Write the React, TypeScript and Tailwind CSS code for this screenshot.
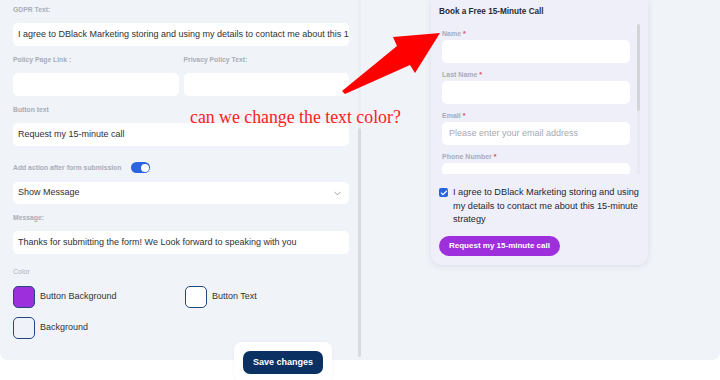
import { ChevronDown, Check } from "lucide-react"

const font = { fontFamily: '"Liberation Sans", Arial, sans-serif' }

function Label({ children }: { children: React.ReactNode }) {
  return <p className="text-[6.8px] font-bold text-[#a9adb7] leading-[7px]">{children}</p>
}

function Field({ value, className = "" }: { value?: string; className?: string }) {
  return (
    <div className={"h-[23px] bg-white rounded-[5px] px-[5px] flex items-center text-[9px] text-[#2f2f33] whitespace-nowrap overflow-hidden " + className}>
      {value}
    </div>
  )
}

function Swatch({ color, label }: { color: string; label: string }) {
  return (
    <div className="flex items-center gap-[5px]">
      <div className={"w-[22px] h-[22px] rounded-[5px] border border-[#24477a] " + color}></div>
      <span className="text-[9px] text-[#333]">{label}</span>
    </div>
  )
}

function PreviewField({ label, placeholder, short }: { label: string; placeholder?: string; short?: boolean }) {
  return (
    <div className="flex flex-col gap-[3px] shrink-0">
      <p className="text-[7px] font-bold text-[#a9abb6] leading-[7px]">
        {label} <span className="text-[#e5484d]">*</span>
      </p>
      <div className={(short ? "h-[11px] rounded-t-[5px]" : "h-[22.5px] rounded-[5px]") + " bg-white px-[7px] flex items-center text-[9px] text-[#a7a9b0]"}>
        {placeholder}
      </div>
    </div>
  )
}

export default function App() {
  return (
    <div className="w-[720px] h-[380px] bg-white relative overflow-hidden" style={font}>
      <div className="h-[360px] bg-[#f0f3f8] rounded-b-[8px] flex">
        {/* settings column */}
        <div className="w-[358px] pl-[13px] pr-[9px] pt-[6px] flex flex-col">
          <Label>GDPR Text:</Label>
          <Field className="mt-[10px]" value="I agree to DBlack Marketing storing and using my details to contact me about this 15-minute strategy" />
          <div className="mt-[10px] grid grid-cols-2 gap-[5px]">
            <div className="flex flex-col gap-[10px]">
              <Label>Policy Page Link :</Label>
              <Field />
            </div>
            <div className="flex flex-col gap-[10px]">
              <Label>Privacy Policy Text:</Label>
              <Field />
            </div>
          </div>
          <div className="mt-[10px]"><Label>Button text</Label></div>
          <Field className="mt-[10px]" value="Request my 15-minute call" />
          <div className="mt-[16px] flex items-center gap-[10px]">
            <Label>Add action after form submission</Label>
            <div className="w-[19px] h-[11px] rounded-full bg-[#2b63e0] flex items-center justify-end pr-[1.5px]">
              <div className="w-[8px] h-[8px] rounded-full bg-white"></div>
            </div>
          </div>
          <div className="mt-[9px] h-[22px] bg-white rounded-[5px] px-[5px] flex items-center justify-between text-[9px] text-[#2f2f33]">
            <span>Show Message</span>
            <ChevronDown size={11} strokeWidth={1.5} className="text-[#777] mr-[1px]" />
          </div>
          <div className="mt-[10px]"><Label>Message:</Label></div>
          <Field className="mt-[10px]" value="Thanks  for submitting the form! We Look forward to speaking with you" />
          <p className="mt-[14px] text-[7px] text-[#aeb1b9] leading-[7px]">Color</p>
          <div className="mt-[11px] grid grid-cols-[172px_1fr] gap-y-[9px]">
            <Swatch color="bg-[#9d2fdc]" label="Button Background" />
            <Swatch color="bg-white" label="Button Text" />
            <Swatch color="bg-[#f0f2fa]" label="Background" />
          </div>
        </div>
        {/* scrollbar of settings column */}
        <div className="w-[3px] flex flex-col">
          <div className="h-[128px] bg-[#eceef2]"></div>
          <div className="h-[229px] bg-[#d9dadd] rounded-full"></div>
        </div>

        {/* preview */}
        <div className="flex-1 pl-[70px]">
          <div className="w-[217px] h-[265px] bg-[#efeffa] rounded-b-[10px] shadow-[0_1px_6px_rgba(60,60,90,0.12)] px-[8px] pt-[8px]">
            <p className="text-[8.2px] font-bold text-[#2a2a30] leading-[8px]">Book a Free 15-Minute Call</p>
            <div className="mt-[8px] flex gap-[7px]">
              <div className="flex-1 pl-[3px] pt-[6px] flex flex-col gap-[8.5px] h-[150px] overflow-hidden">
                <PreviewField label="Name" />
                <PreviewField label="Last Name" />
                <PreviewField label="Email" placeholder="Please enter your email address" />
                <PreviewField label="Phone Number" short />
              </div>
              <div className="w-[3px] h-[150px] flex flex-col">
                <div className="h-[87px] bg-[#d3d4da] rounded-full"></div>
                <div className="flex-1 bg-[#e8e9f2]"></div>
              </div>
            </div>
            <div className="mt-[12px] flex gap-[5px]">
              <div className="w-[9px] h-[9px] mt-[2px] shrink-0 rounded-[2px] bg-[#2a63df] flex items-center justify-center">
                <Check size={8} strokeWidth={3.5} className="text-white" />
              </div>
              <p className="text-[9.2px] leading-[13.5px] text-[#27272b]">
                I agree to DBlack Marketing storing and using my details to contact me about this 15-minute strategy
              </p>
            </div>
            <button className="mt-[9px] h-[20px] px-[10px] rounded-full bg-[#9d2fdc] text-white text-[8px] font-bold">
              Request my 15-minute call
            </button>
          </div>
        </div>
      </div>

      {/* sticky save bar */}
      <div className="absolute left-[234px] top-[342px] w-[98px] h-[40px] bg-white rounded-[7px] shadow-[0_0_4px_rgba(0,0,0,0.04)] flex justify-center pt-[9px]">
        <button className="w-[80px] h-[23px] rounded-[7px] bg-[#0a3161] text-white text-[9px] font-bold">Save changes</button>
      </div>

      {/* annotation */}
      <p className="absolute left-[190px] top-[109px] text-[17.8px] text-[#ff2020] leading-none whitespace-nowrap" style={{ fontFamily: '"Liberation Serif", "Times New Roman", serif' }}>
        can we change the text color?
      </p>
      <svg className="absolute left-0 top-0" width="720" height="380" viewBox="0 0 720 380">
        <polygon points="342,91 397,46 393,37 440,33 415,73 410,65 345,94" fill="#ff0000" />
      </svg>
    </div>
  )
}
